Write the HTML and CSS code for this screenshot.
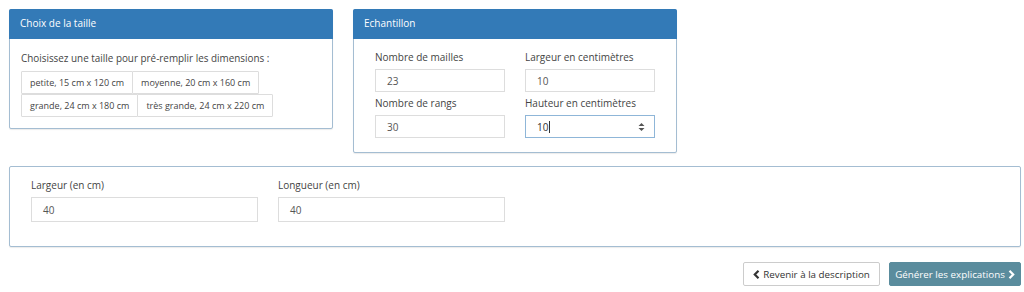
FILE: index.html
```html
<!DOCTYPE html>
<html lang="fr">
<head>
<meta charset="utf-8">
<link rel="stylesheet" href="styles.css">
</head>
<body>
<div class="page">
  <div class="top-row">
    <section class="panel panel-taille">
      <div class="panel-heading">Choix de la taille</div>
      <div class="panel-body">
        <p class="intro">Choisissez une taille pour pré-remplir les dimensions :</p>
        <div class="size-row">
          <button class="size-btn">petite, 15 cm x 120 cm</button><button class="size-btn">moyenne, 20 cm x 160 cm</button>
        </div>
        <div class="size-row">
          <button class="size-btn">grande, 24 cm x 180 cm</button><button class="size-btn">très grande, 24 cm x 220 cm</button>
        </div>
      </div>
    </section>
    <section class="panel panel-echantillon">
      <div class="panel-heading">Echantillon</div>
      <div class="panel-body grid2">
        <div class="field"><label>Nombre de mailles</label><div class="input">23</div></div>
        <div class="field"><label>Largeur en centimètres</label><div class="input">10</div></div>
        <div class="field"><label>Nombre de rangs</label><div class="input">30</div></div>
        <div class="field"><label>Hauteur en centimètres</label><div class="input focus"><span>10<span class="caret"></span></span><svg class="spin" width="7" height="10" viewBox="0 0 7 10"><path d="M3.5 1 L6.5 4 L0.5 4 Z M3.5 9 L6.5 6 L0.5 6 Z" fill="#555"/></svg></div></div>
      </div>
    </section>
  </div>
  <section class="panel panel-dims">
    <div class="dims-row">
      <div class="field wide"><label>Largeur (en cm)</label><div class="input">40</div></div>
      <div class="field wide"><label>Longueur (en cm)</label><div class="input">40</div></div>
    </div>
  </section>
  <div class="actions">
    <button class="btn btn-default"><svg width="7" height="9" viewBox="0 0 7 9"><path d="M5.5 0.8 L1.8 4.5 L5.5 8.2" stroke="#333" stroke-width="2.2" fill="none"/></svg>Revenir à la description</button>
    <button class="btn btn-primary">Générer les explications<svg width="7" height="9" viewBox="0 0 7 9"><path d="M1.5 0.8 L5.2 4.5 L1.5 8.2" stroke="#fff" stroke-width="2.2" fill="none"/></svg></button>
  </div>
</div>
</body>
</html>
```
FILE: styles.css
```css
* { box-sizing: border-box; }
html, body { margin: 0; padding: 0; background: #fff; }
body {
  font-family: "Open Sans", "DejaVu Sans", sans-serif;
  font-size: 10px;
  color: #555;
}
.page { padding: 9px 3px 0 9px; }
.top-row { display: flex; gap: 20px; align-items: flex-start; }
.panel {
  border: 1px solid #337ab7;
  border-radius: 2px;
  background: #fff;
  box-shadow: 0 1px 1px rgba(0,0,0,0.08);
}
.panel-taille { width: 324px; height: 120px; border-color: #a4bdd2; }
.panel-echantillon { width: 324px; height: 144px; border-color: #a4bdd2; }
.panel-heading {
  background: #337ab7;
  color: #fff;
  height: 30px;
  line-height: 28px;
  padding: 0 11px;
  margin: -1px -1px 0 -1px;
  border-radius: 2px 2px 0 0;
  font-size: 10px;
}
.panel-taille .panel-body { padding: 10px 11px; }
.intro { margin: 2px 0 6px; line-height: 14px; color: #444; font-size: 9.9px; }
.size-row { display: flex; height: 23px; }
.size-btn {
  font-family: inherit;
  font-size: 9px;
  color: #444;
  background: #fff;
  border: 1px solid #ddd;
  padding: 0 8px;
  height: 23px;
  margin: 0 -1px 0 0;
  border-radius: 1px;
  white-space: nowrap;
}
.grid2 {
  display: grid;
  grid-template-columns: 130px 130px;
  column-gap: 20px;
  padding: 11px 21px 0 21px;
}
.field label { display: block; color: #444; line-height: 14px; margin-bottom: 5px; }
.input {
  display: flex;
  align-items: center;
  justify-content: space-between;
  height: 23px;
  border: 1px solid #ddd;
  padding: 0 11px;
  color: #555;
  background: #fff;
  margin-bottom: 4px;
}
.input.focus { border-color: #8fb6d8; color: #333; }
.caret { display: inline-block; width: 1px; height: 12px; background: #333; vertical-align: -2px; margin-left: 1px; }
.spin { margin-right: -2px; }
.panel-dims {
  margin-top: 13px;
  width: 1012px;
  height: 81px;
  border-color: #a4bdd2;
}
.dims-row { display: flex; gap: 20px; padding: 11px 21px 0 21px; }
.field.wide { width: 227px; }
.field.wide .input { height: 25px; }
.actions {
  display: flex;
  justify-content: flex-end;
  gap: 9px;
  margin-top: 15px;
}
.btn {
  font-family: inherit;
  font-size: 9.8px;
  height: 24px;
  padding: 0;
  border-radius: 2px;
  display: inline-flex;
  align-items: center;
  justify-content: center;
  gap: 3px;
  white-space: nowrap;
}
.btn-default { background: #fff; border: 1px solid #ccc; color: #333; width: 137px; }
.btn-primary { background: #5a8c9d; border: 1px solid #5a8c9d; color: #fff; width: 132px; }
```
